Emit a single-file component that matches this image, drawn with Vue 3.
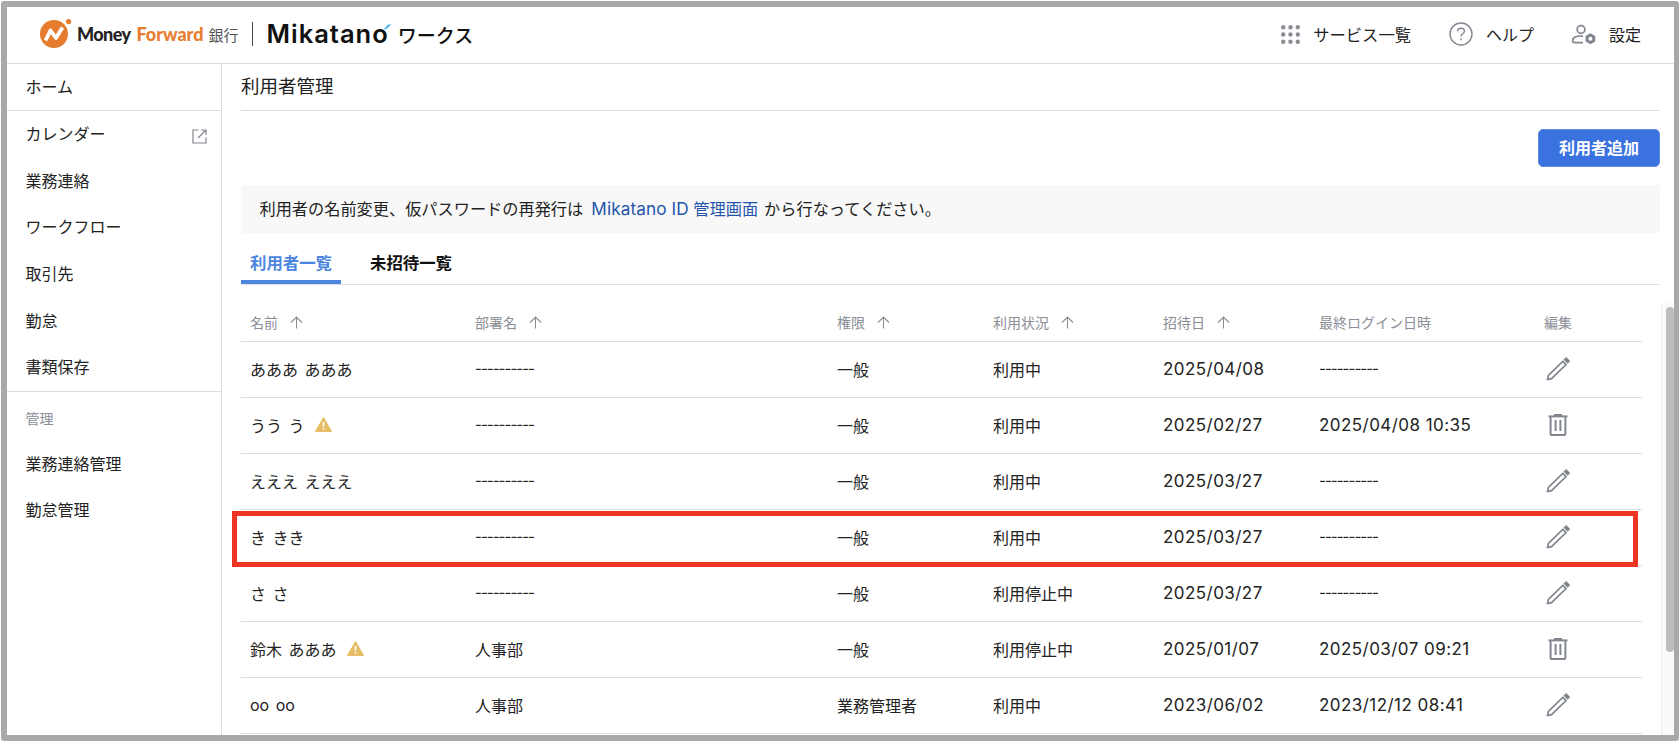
<template>
    <div class="page">
        <div class="frame">
            <!-- ヘッダー -->
            <header class="top-bar">
                <div class="brand">
                    <svg class="mf-mark" width="32" height="32" viewBox="0 0 32 32">
                        <circle cx="14" cy="16" r="14" fill="#e67d2e" />
                        <path d="M20 0 H32 V12 Z" fill="#fff" />
                        <circle cx="28.6" cy="3.6" r="2.6" fill="#e67d2e" />
                        <path d="M5.5 22.5 L10.5 12.5 L16 20 L22.5 9.5" fill="none" stroke="#fff" stroke-width="3.8" stroke-linejoin="round" />
                    </svg>
                    <span class="mf-money">Money</span>
                    <span class="mf-forward">Forward</span>
                    <span class="mf-bank">銀行</span>
                    <span class="brand-sep"></span>
                    <span class="mk-name">Mikatano<svg class="mk-accent" width="9" height="6" viewBox="0 0 9 6"><path d="M0.5 5.5 L5 0.5 L8.5 0.5 L3.5 5 Z" fill="#4fb6ee" /></svg></span>
                    <span class="mk-works">ワークス</span>
                </div>
                <nav class="tools">
                    <a class="tool tool-services">
                        <svg width="19" height="19" viewBox="0 0 19 19" fill="#8a8e96">
                            <template v-for="y in [2.2, 9.5, 16.8]" :key="y">
                                <circle v-for="x in [2.2, 9.5, 16.8]" :key="x" :cx="x" :cy="y" r="2.2" />
                            </template>
                        </svg>
                        <span>サービス一覧</span>
                    </a>
                    <a class="tool tool-tight">
                        <svg width="24" height="24" viewBox="0 0 24 24" fill="none" stroke="#82868f" stroke-width="1.4">
                            <circle cx="12" cy="12" r="11" />
                            <path d="M8.6 9.3 C8.6 7.2 10.2 6.2 12 6.2 C13.9 6.2 15.4 7.4 15.4 9.2 C15.4 11.6 12 11.8 12 14.4" />
                            <path d="M12 16.4 V18.2" stroke-width="1.6" />
                        </svg>
                        <span>ヘルプ</span>
                    </a>
                    <a class="tool tool-tight">
                        <svg width="25" height="24" viewBox="0 0 25 24">
                            <circle cx="10" cy="7.5" r="3.9" fill="none" stroke="#82868f" stroke-width="1.7" />
                            <path d="M12 14.2 C7 13.4 1.6 15 1.6 18.4 C1.6 20 2.6 20.6 3.8 20.6 H12" fill="none" stroke="#82868f" stroke-width="1.7" />
                            <path d="M19.4 11.2 L24.2 14 V19.4 L19.4 22.2 L14.6 19.4 V14 Z" fill="#82868f" />
                            <circle cx="19.4" cy="16.7" r="2" fill="#fff" />
                        </svg>
                        <span>設定</span>
                    </a>
                </nav>
            </header>

            <div class="layout">
                <!-- サイドメニュー -->
                <aside class="side">
                    <a class="side-home">ホーム</a>
                    <div class="side-group">
                        <a v-for="item in menuItems" :key="item" class="side-item">
                            {{ item }}
                            <svg v-if="item === 'カレンダー'" class="ext-icon" width="15" height="15" viewBox="0 0 15 15" fill="none" stroke="#82868f" stroke-width="1.2">
                                <path d="M6.5 1 H1 V14 H14 V8.5" />
                                <path d="M6 9 L14 1 M9 1 H14 V6" />
                            </svg>
                        </a>
                    </div>
                    <div class="side-head">管理</div>
                    <a v-for="item in adminItems" :key="item" class="side-item">{{ item }}</a>
                </aside>

                <!-- メイン -->
                <main class="main">
                    <h1 class="page-title">利用者管理</h1>
                    <div class="actions">
                        <button class="btn-add">利用者追加</button>
                    </div>
                    <p class="notice">
                        利用者の名前変更、仮パスワードの再発行は<a class="notice-link"><span class="latin">Mikatano ID</span> 管理画面</a>から行なってください。
                    </p>

                    <div class="tabs">
                        <a class="tab tab-active">利用者一覧</a>
                        <a class="tab">未招待一覧</a>
                    </div>

                    <div class="scroll-area">
                        <table class="users">
                            <colgroup>
                                <col v-for="w in colWidths" :key="w.id" :style="{ width: w.px + 'px' }" />
                            </colgroup>
                            <thead>
                                <tr>
                                    <th v-for="col in columns" :key="col.label">
                                        <span class="th-inner">
                                            {{ col.label }}
                                            <svg v-if="col.sort" width="13" height="13" viewBox="0 0 13 13" fill="none" stroke="#8a8e96" stroke-width="1.1">
                                                <path d="M6.5 12.5 V1 M1 6.5 L6.5 1 L12 6.5" />
                                            </svg>
                                        </span>
                                    </th>
                                </tr>
                            </thead>
                            <tbody>
                                <tr v-for="row in rows" :key="row.name">
                                    <td>
                                        <span class="name-cell">
                                            {{ row.name }}
                                            <svg v-if="row.warn" width="17" height="15" viewBox="0 0 17 15">
                                                <path d="M8.5 0.6 L16.6 14.6 H0.4 Z" fill="#e6bd64" stroke="#e6bd64" stroke-linejoin="round" />
                                                <path d="M8.5 5 V9.6 M8.5 11 V12.6" stroke="#fff" stroke-width="1.7" />
                                            </svg>
                                        </span>
                                    </td>
                                    <td :class="{ dash: row.dept === empty }">{{ row.dept }}</td>
                                    <td>{{ row.role }}</td>
                                    <td>{{ row.status }}</td>
                                    <td class="date">{{ row.invited }}</td>
                                    <td :class="row.login === empty ? 'dash' : 'date'">{{ row.login }}</td>
                                    <td class="edit-cell">
                                        <svg v-if="row.warn" class="trash" width="20" height="22" viewBox="0 0 20 22" fill="none" stroke="#82868f" stroke-width="2">
                                            <path d="M0.5 2.4 H19.5" />
                                            <path d="M2.6 2.4 V20 C2.6 20.6 3 21 3.6 21 H16.4 C17 21 17.4 20.6 17.4 20 V2.4" />
                                            <path d="M6 1 H14" />
                                            <path d="M7.6 6 V17 M12.4 6 V17" />
                                        </svg>
                                        <svg v-else class="pencil" width="24" height="24" viewBox="0 0 24 24" fill="none" stroke="#82868f" stroke-width="1.7">
                                            <path d="M1.6 22.4 L2.4 18.4 L16.8 4.4 L20 7.6 L5.6 21.6 Z" />
                                            <path d="M18.6 2.6 L20.2 1.2 L23 4 L21.6 5.6 Z" fill="#82868f" />
                                        </svg>
                                    </td>
                                </tr>
                            </tbody>
                        </table>
                        <div class="scroll-track">
                            <div class="scroll-thumb"></div>
                        </div>
                    </div>

                    <!-- 赤枠の注釈 -->
                    <div class="callout"></div>
                </main>
            </div>
        </div>
    </div>
</template>

<script setup>
const empty = '----------';

const menuItems = ['カレンダー', '業務連絡', 'ワークフロー', '取引先', '勤怠', '書類保存'];
const adminItems = ['業務連絡管理', '勤怠管理'];

const colWidths = [
    { id: 'name', px: 225 },
    { id: 'dept', px: 362 },
    { id: 'role', px: 156 },
    { id: 'status', px: 170 },
    { id: 'invited', px: 156 },
    { id: 'login', px: 225 },
    { id: 'edit', px: 107 },
];

const columns = [
    { label: '名前', sort: true },
    { label: '部署名', sort: true },
    { label: '権限', sort: true },
    { label: '利用状況', sort: true },
    { label: '招待日', sort: true },
    { label: '最終ログイン日時', sort: false },
    { label: '編集', sort: false },
];

const rows = [
    { name: 'あああ あああ', dept: empty, role: '一般', status: '利用中', invited: '2025/04/08', login: empty },
    { name: 'うう う', warn: true, dept: empty, role: '一般', status: '利用中', invited: '2025/02/27', login: '2025/04/08 10:35' },
    { name: 'えええ えええ', dept: empty, role: '一般', status: '利用中', invited: '2025/03/27', login: empty },
    { name: 'き きき', dept: empty, role: '一般', status: '利用中', invited: '2025/03/27', login: empty },
    { name: 'さ さ', dept: empty, role: '一般', status: '利用停止中', invited: '2025/03/27', login: empty },
    { name: '鈴木 あああ', warn: true, dept: '人事部', role: '一般', status: '利用停止中', invited: '2025/01/07', login: '2025/03/07 09:21' },
    { name: 'oo oo', dept: '人事部', role: '業務管理者', status: '利用中', invited: '2023/06/02', login: '2023/12/12 08:41' },
];
</script>

<style>
html,
body {
    background: #fff;
}
</style>

<style scoped>
.page {
    width: 1680px;
    height: 744px;
    padding: 1px 1px 3px 1px;
    box-sizing: border-box;
    font-family: Inter, "Noto Sans CJK JP", sans-serif;
    font-size: 16px;
    color: #222;
    overflow: hidden;
}

.frame {
    height: 100%;
    box-sizing: border-box;
    border: solid #aaa9a7;
    border-width: 6px 5px 6px 6px;
    border-radius: 3px;
    display: flex;
    flex-direction: column;
    overflow: hidden;
}

/* ヘッダー */
.top-bar {
    height: 57px;
    flex: none;
    box-sizing: border-box;
    border-bottom: 1px solid #dedede;
    display: flex;
    align-items: center;
    justify-content: space-between;
    padding: 0 33px 2px 33px;
}

.brand {
    display: flex;
    align-items: center;
}

.mf-mark {
    flex: none;
    margin-right: 5px;
}

.mf-money,
.mf-forward {
    font-family: Lato, sans-serif;
    font-weight: 900;
    font-size: 18px;
    line-height: 1;
}

.mf-money {
    color: #222;
    letter-spacing: -0.6px;
}

.mf-forward {
    color: #e67d2e;
    margin-left: 6px;
}

.mf-bank {
    margin-left: 5px;
    font-size: 15px;
    color: #555;
}

.brand-sep {
    width: 1px;
    height: 24px;
    background: #444;
    margin: 0 14px 0 13px;
}

.mk-name {
    position: relative;
    font-weight: 600;
    font-size: 25.5px;
    letter-spacing: 1px;
    line-height: 1;
    color: #111;
}

.mk-accent {
    position: absolute;
    right: -3px;
    top: 3px;
}

.mk-works {
    margin-left: 9px;
    font-size: 19px;
    font-weight: 500;
    color: #111;
}

.tools {
    display: flex;
    align-items: center;
    gap: 37px;
}

.tool {
    display: flex;
    align-items: center;
    gap: 13px;
}

.tool-services {
    margin-right: 1px;
    font-size: 16.3px;
}

.tool-tight {
    gap: 13px;
}

/* サイドメニュー */
.layout {
    flex: 1;
    display: flex;
    min-height: 0;
}

.side {
    width: 215px;
    flex: none;
    box-sizing: border-box;
    border-right: 1px solid #dedede;
}

.side-home {
    display: flex;
    align-items: center;
    height: 47px;
    box-sizing: border-box;
    padding: 0 0 2px 18.5px;
    border-bottom: 1px solid #dedede;
}

.side-group {
    border-bottom: 1px solid #dedede;
}

.side-item {
    display: flex;
    align-items: center;
    justify-content: space-between;
    height: 46.6px;
    box-sizing: border-box;
    padding: 0 14px 2px 18.5px;
}

.ext-icon {
    margin-top: 6px;
}

.side-head {
    height: 49px;
    padding: 17px 0 0 18.5px;
    box-sizing: border-box;
    font-size: 14px;
    line-height: 20px;
    color: #8a8e96;
}

/* メイン */
.main {
    flex: 1;
    position: relative;
    padding-left: 19px;
    min-width: 0;
    display: flex;
    flex-direction: column;
}

.page-title {
    margin: 0 14px 0 0;
    height: 47px;
    flex: none;
    box-sizing: border-box;
    border-bottom: 1px solid #dedede;
    font-size: 18.5px;
    font-weight: 400;
    line-height: 44px;
}

.actions {
    display: flex;
    justify-content: flex-end;
    margin: 18px 14px 18px 0;
}

.btn-add {
    width: 122px;
    height: 38px;
    border: 1px solid #5d8ce6;
    border-radius: 5px;
    background: #3a72e0;
    color: #fff;
    font: inherit;
    font-weight: 700;
    padding: 0 0 2px;
}

.notice {
    margin: 0 14px 0 0;
    height: 48px;
    flex: none;
    padding-left: 18.5px;
    background: #f8f8f8;
    font-size: 16.2px;
    line-height: 47px;
    white-space: nowrap;
}

.notice-link {
    color: #2455ad;
    margin: 0 6px 0 8px;
}

.latin {
    font-size: 17.2px;
    letter-spacing: 0.1px;
}

.tabs {
    display: flex;
    margin-right: 14px;
    height: 52px;
    flex: none;
    box-sizing: border-box;
    border-bottom: 1px solid #e0e0e0;
}

.tab {
    width: 100px;
    height: 51px;
    box-sizing: border-box;
    padding-top: 18px;
    margin-right: 20px;
    text-align: center;
    font-size: 16.4px;
    font-weight: 700;
    line-height: 24px;
    color: #111;
}

.tab-active {
    color: #4a86de;
    border-bottom: 4px solid #4a86de;
}

.scroll-area {
    flex: 1;
    min-height: 0;
    display: flex;
    justify-content: space-between;
    margin-top: 18px;
    overflow: hidden;
}

.users {
    table-layout: fixed;
    width: 1401px;
    height: 0;
    border-collapse: separate;
    border-spacing: 0;
}

.users th {
    height: 39px;
    box-sizing: border-box;
    padding: 0 0 0 9px;
    border-bottom: 1px solid #dedede;
    text-align: left;
    font-size: 14px;
    font-weight: 400;
    color: #8a8e96;
}

.th-inner {
    display: inline-flex;
    align-items: center;
    gap: 12px;
}

.users td {
    height: 56px;
    box-sizing: border-box;
    padding: 0 0 2px 9px;
    border-bottom: 1px solid #dedede;
    white-space: nowrap;
}

.name-cell {
    display: inline-flex;
    align-items: center;
    gap: 10px;
    word-spacing: 2px;
}

.date {
    font-size: 17px;
    letter-spacing: 0.45px;
}

.dash {
    font-size: 15px;
    letter-spacing: -1px;
}

.edit-cell svg {
    display: block;
}

.pencil {
    margin-left: 2px;
}

.trash {
    margin-left: 4px;
}

.scroll-track {
    width: 13px;
    flex: none;
    box-sizing: border-box;
    border-left: 1px solid #eee;
    background: #fafafa;
    padding: 4px 0 0 4px;
}

.scroll-thumb {
    height: 345px;
    border-radius: 4px;
    background: #bdbdbd;
}

.callout {
    position: absolute;
    left: 10px;
    top: 447px;
    width: 1406px;
    height: 56px;
    box-sizing: border-box;
    border: 5.6px solid #ee3524;
}
</style>
